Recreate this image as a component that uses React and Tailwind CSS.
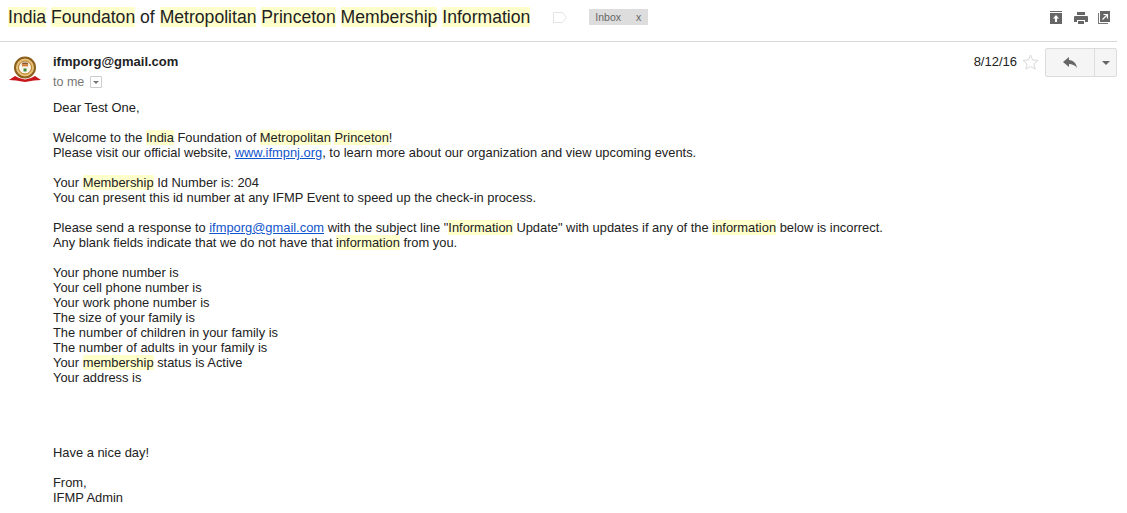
const Hl = ({ children }) => <span className="bg-[#ffffcc]">{children}</span>;

const Lines = ({ children }) => <div className="mb-[15px]">{children}</div>;

const Crest = () => (
  <svg width="32" height="28" viewBox="0 0 32 28" className="block">
    <circle cx="16" cy="11.5" r="10" fill="#e6c27c" stroke="#8c5f1a" strokeWidth="2" />
    <circle cx="16" cy="11.5" r="6.5" fill="#fbf6ea" stroke="#b5781f" strokeWidth="1" />
    <path d="M13.5 6.5 h5 l1 2 h-7 Z" fill="#8a5a2c" />
    <path d="M13 8.5 h6 v2 h-6 Z" fill="#d9772a" />
    <path d="M14 10.5 h4 v2 h-4 Z" fill="#f4f0e8" />
    <path d="M14.5 12.5 h3 v3 h-3 Z" fill="#3f8a3c" />
    <path d="M0 24 L6 20 L10 22 L16 23.5 L22 22 L26 20 L32 24 L25 24.5 L16 26 L7 24.5 Z" fill="#c8171c" />
  </svg>
);

export default function App() {
  return (
    <div className="w-[1127px] h-[513px] overflow-hidden bg-white font-['Liberation_Sans',Arial,sans-serif] text-[#222222]">
      <div className="w-[1117px] h-[42px] border-b border-[#d8d8d8] flex items-center pl-2 pb-[7px]">
        <div className="text-[17.6px] leading-[24px] text-[#222222] whitespace-nowrap">
          <Hl>India</Hl> <Hl>Foundaton</Hl> of <Hl>Metropolitan</Hl> <Hl>Princeton</Hl> <Hl>Membership</Hl> <Hl>Information</Hl>
        </div>
        <svg width="15" height="11" viewBox="0 0 15 11" className="ml-[23px]">
          <path d="M0.5 0.5 H9.5 L13.5 5.5 L9.5 10.5 H0.5 Z" fill="none" stroke="#e4e4e4" />
        </svg>
        <div className="ml-[21px] w-[59px] h-[16px] bg-[#dddddd] text-[#666666] text-[10.5px] leading-[16px] flex justify-between pl-[6px] pr-[7px]">
          <span>Inbox</span>
          <span>x</span>
        </div>
        <div className="ml-auto flex items-center pr-[7px] pt-[1px]">
          <svg width="12" height="13" viewBox="0 0 12 13">
            <path d="M0 0 H12 V1 H0 Z M0 2 H12 V13 H0 Z" fill="#666666" />
            <path d="M6 4 L9 7.5 H7 V11 H5 V7.5 H3 Z" fill="#ffffff" />
          </svg>
          <svg width="14" height="12" viewBox="0 0 14 12" className="ml-[12px]">
            <path d="M3 0 H11 V3 H3 Z M1 4 H13 Q14 4 14 5 V10 H11 V8 H3 V10 H0 V5 Q0 4 1 4 Z M4 9 H10 V12 H4 Z" fill="#666666" />
          </svg>
          <svg width="12" height="13" viewBox="0 0 12 13" className="ml-[10px]">
            <path d="M2 0 H12 V11 H2 Z" fill="#666666" />
            <path d="M0 2 H1 V12 H10 V13 H0 Z" fill="#777777" />
            <path d="M4.5 8.5 L9 4 M5.5 3.5 H9.5 V7.5" fill="none" stroke="#ffffff" strokeWidth="1.2" />
          </svg>
        </div>
      </div>

      <div className="flex w-[1117px]">
        <div className="w-[53px] shrink-0 pl-[9px] pt-[14px]">
          <Crest />
        </div>
        <div className="flex-1 min-w-0">
          <div className="flex justify-between h-[58px]">
            <div className="pt-[12px]">
              <div className="text-[13px] leading-[16px] font-bold text-[#222222]">ifmporg@gmail.com</div>
              <div className="flex items-center mt-[5px] text-[12.5px] leading-[14px] text-[#777777]">
                to me
                <span className="ml-[6px] w-[12px] h-[12px] border border-[#cccccc] rounded-[1px] flex items-center justify-center">
                  <span className="w-0 h-0 border-x-[3px] border-x-transparent border-t-[3px] border-t-[#777777]"></span>
                </span>
              </div>
            </div>
            <div className="flex items-start pt-[6px]">
              <span className="text-[13px] leading-[26px] text-[#222222] mt-[1px]">8/12/16</span>
              <span className="ml-[5px] mt-[6px]">
                <svg width="17" height="16" viewBox="0 0 17 16">
                  <path d="M8.5 1 L10.6 6 L16 6.4 L11.9 9.9 L13.2 15.2 L8.5 12.4 L3.8 15.2 L5.1 9.9 L1 6.4 L6.4 6 Z" fill="none" stroke="#d9d9d9" />
                </svg>
              </span>
              <div className="ml-[6px] flex w-[72px] h-[29px] border border-[#dcdcdc] rounded-[2px] bg-[#f5f5f5]">
                <div className="w-[49px] border-r border-[#dcdcdc] flex items-center justify-center">
                  <svg width="14" height="11" viewBox="0 0 14 11">
                    <path d="M6 0 L0 5 L6 10 V7 C9 7 12 8 14 11 C13.5 6.5 10.5 3.5 6 3 Z" fill="#666666" />
                  </svg>
                </div>
                <div className="flex-1 flex items-center justify-center">
                  <span className="w-0 h-0 border-x-[4px] border-x-transparent border-t-[4px] border-t-[#666666]"></span>
                </div>
              </div>
            </div>
          </div>

          <div className="text-[12.9px] leading-[15px] text-[#222222] whitespace-nowrap">
            <Lines>Dear Test One,</Lines>
            <Lines>
              <div>Welcome to the <Hl>India</Hl> Foundation of <Hl>Metropolitan</Hl> <Hl>Princeton</Hl>!</div>
              <div>Please visit our official website, <a className="text-[#1155cc] underline">www.ifmpnj.org</a>, to learn more about our organization and view upcoming events.</div>
            </Lines>
            <Lines>
              <div>Your <Hl>Membership</Hl> Id Number is: 204</div>
              <div>You can present this id number at any IFMP Event to speed up the check-in process.</div>
            </Lines>
            <Lines>
              <div>Please send a response to <a className="text-[#1155cc] underline">ifmporg@gmail.com</a> with the subject line "<Hl>Information</Hl> Update" with updates if any of the <Hl>information</Hl> below is incorrect.</div>
              <div>Any blank fields indicate that we do not have that <Hl>information</Hl> from you.</div>
            </Lines>
            <div className="mb-[60px]">
              <div>Your phone number is</div>
              <div>Your cell phone number is</div>
              <div>Your work phone number is</div>
              <div>The size of your family is</div>
              <div>The number of children in your family is</div>
              <div>The number of adults in your family is</div>
              <div>Your <Hl>membership</Hl> status is Active</div>
              <div>Your address is</div>
            </div>
            <Lines>Have a nice day!</Lines>
            <div>From,</div>
            <div>IFMP Admin</div>
          </div>
        </div>
      </div>
    </div>
  );
}
